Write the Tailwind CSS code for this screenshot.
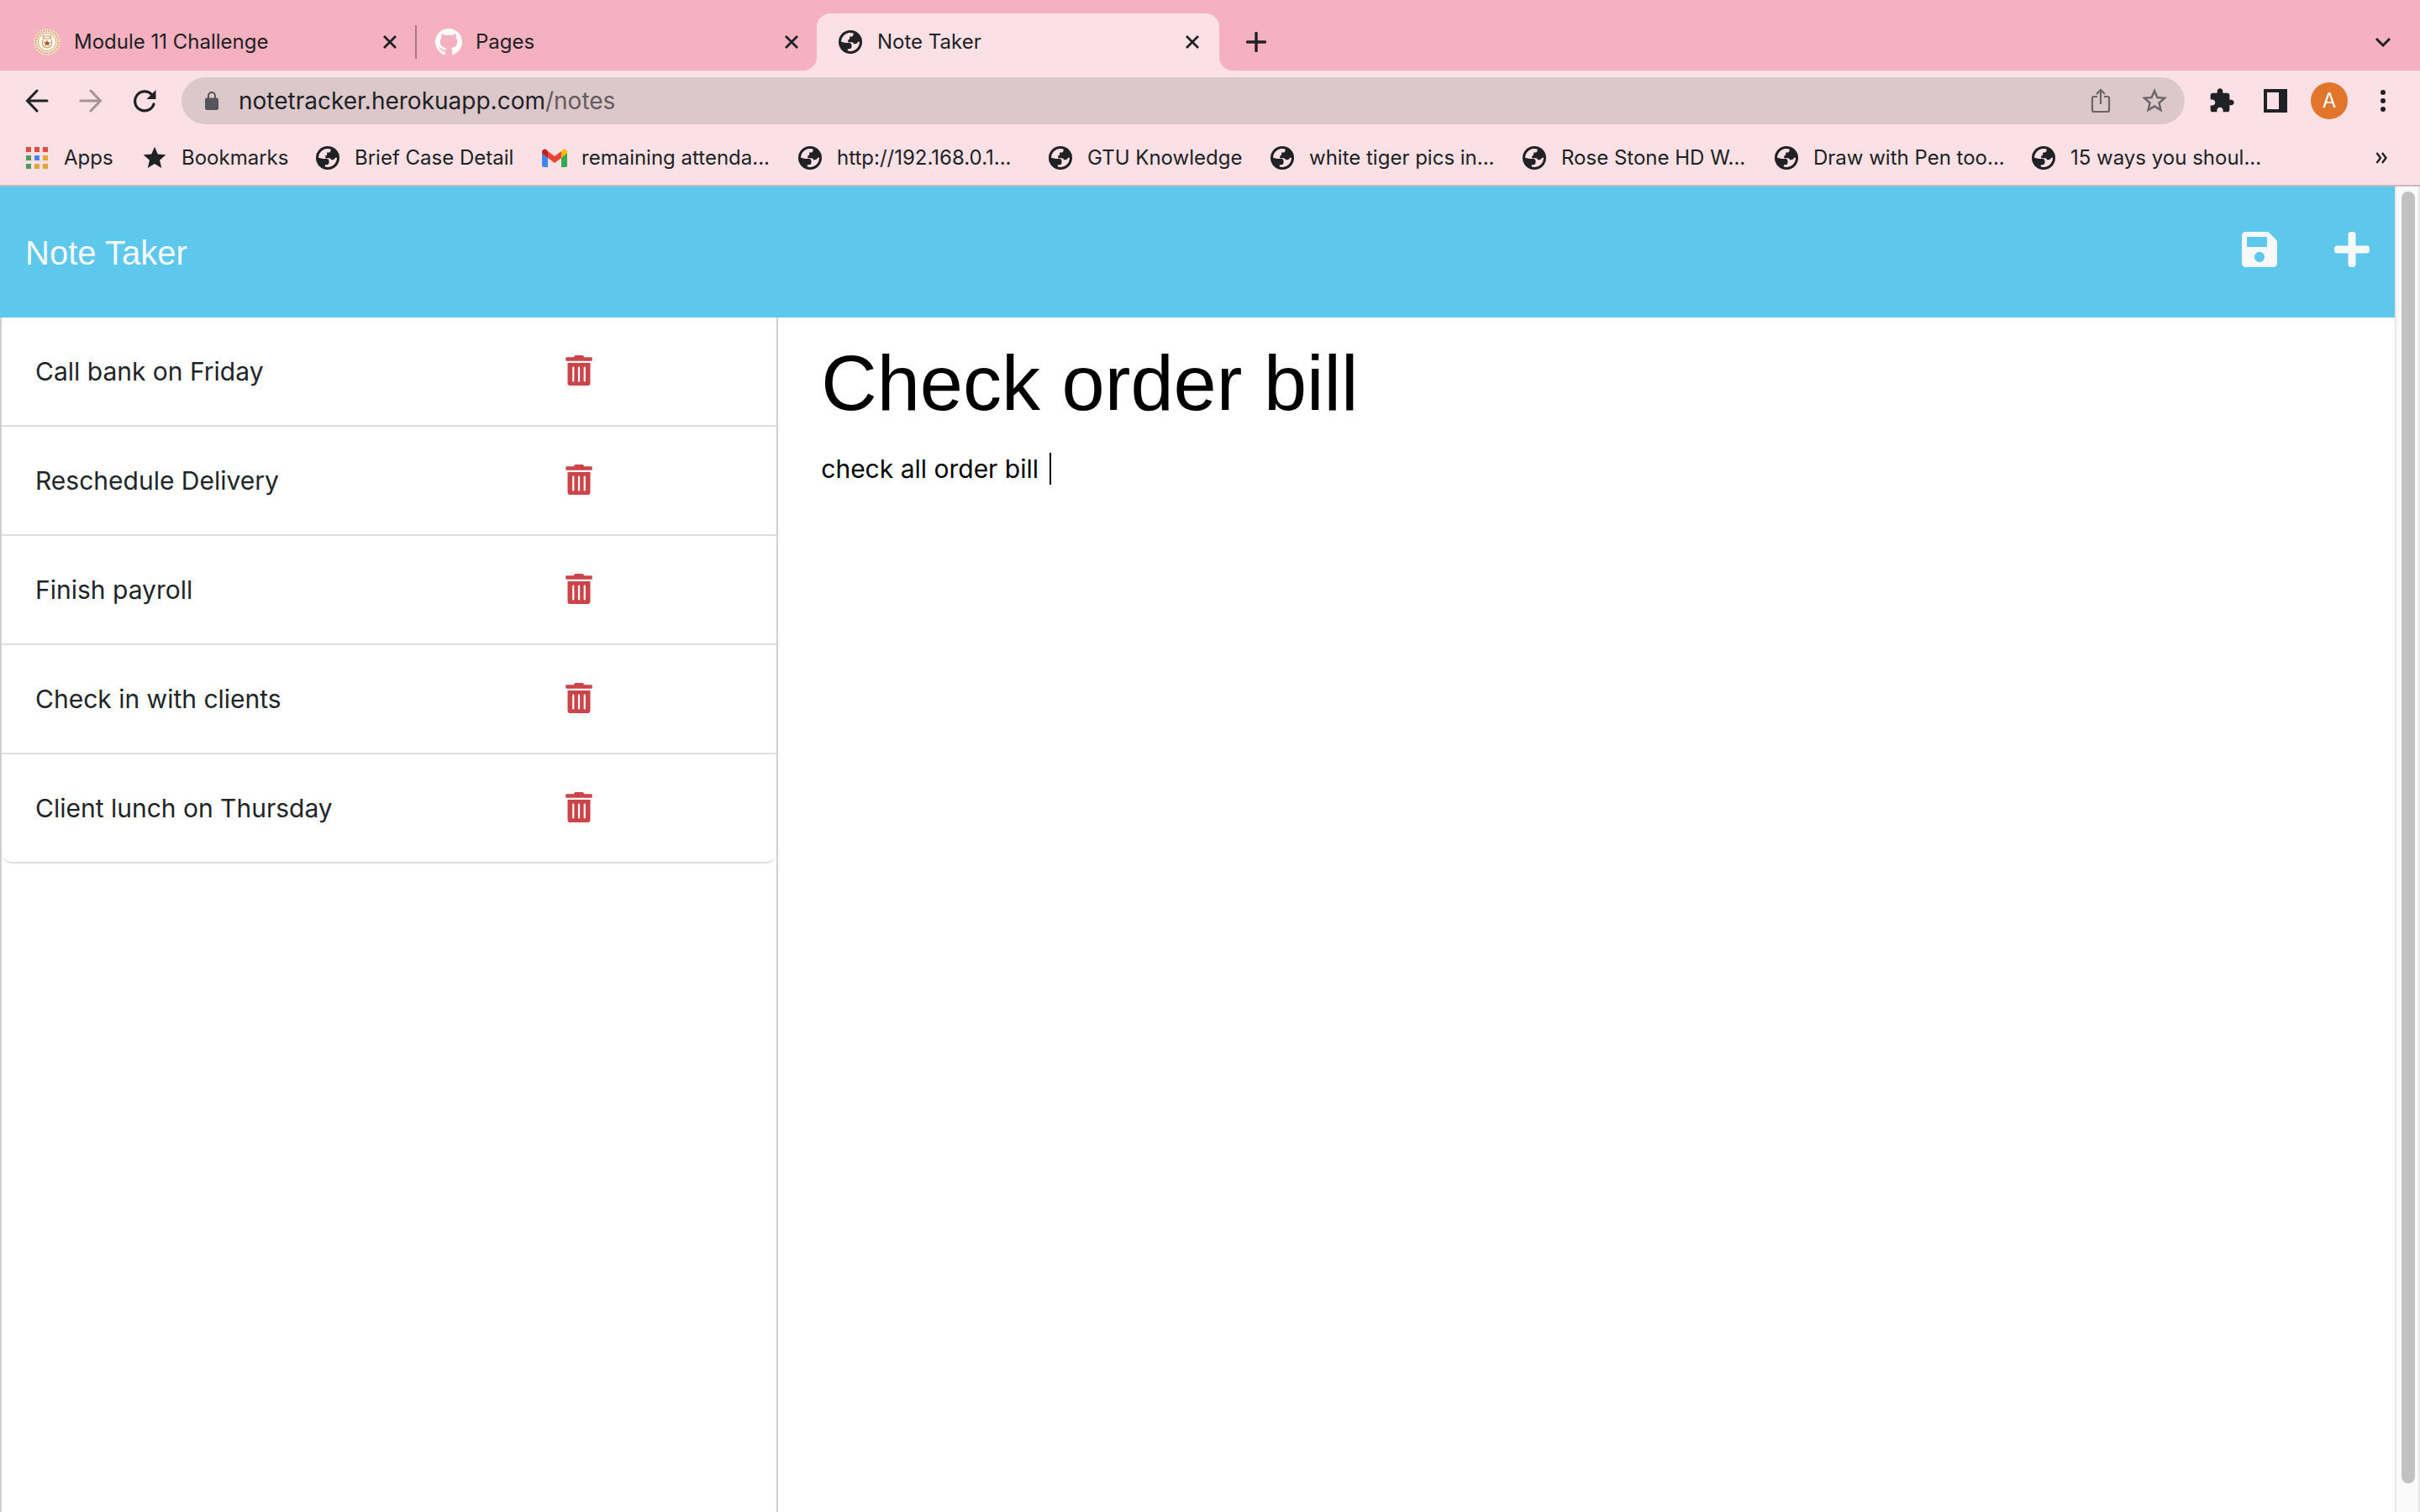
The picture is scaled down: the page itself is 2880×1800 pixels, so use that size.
<!DOCTYPE html>
<html lang="en">
<head>
<meta charset="utf-8">
<meta name="viewport" content="width=device-width, initial-scale=1">
<title>Note Taker</title>
<script src="https://cdn.jsdelivr.net/npm/@tailwindcss/browser@4"></script>
</head>
<body class="flex min-h-screen flex-col bg-white font-['Inter',sans-serif] text-[#202124]">

<!-- shared symbols -->
<svg class="hidden" aria-hidden="true">
  <symbol id="globe" viewBox="0 0 28 28"><circle cx="14" cy="14" r="14" fill="#202124"/><path fill="#fbe1e5" d="M3 13.800A11 11 0 0 1 17.600 3.600v1.200a2.800 2.800 0 0 1-2.800 2.800h-1.600v2a2 2 0 0 1-2 2v2.600h4.600a2.400 2.400 0 0 1 2.300 2h1.900a3 3 0 0 0 3-2.400h2A11 11 0 0 1 10.800 24.500v-2.300h2.400a2.400 2.400 0 0 0 2.300-2.400v-2a2.800 2.800 0 0 0-2.800-2.800H8.400Z"/></symbol>
  <symbol id="close" viewBox="0 0 16 16"><path d="M1 1l14 14M15 1L1 15" stroke="#202124" stroke-width="2.800" fill="none"/></symbol>
  <symbol id="trash" viewBox="0 0 448 512"><path fill="currentColor" d="M32 464a48 48 0 0 0 48 48h288a48 48 0 0 0 48-48V128H32zm272-256a16 16 0 0 1 32 0v224a16 16 0 0 1-32 0zm-96 0a16 16 0 0 1 32 0v224a16 16 0 0 1-32 0zm-96 0a16 16 0 0 1 32 0v224a16 16 0 0 1-32 0zM432 32H312l-9.400-18.700A24 24 0 0 0 281.100 0H166.800a23.720 23.720 0 0 0-21.400 13.300L136 32H16A16 16 0 0 0 0 48v32a16 16 0 0 0 16 16h416a16 16 0 0 0 16-16V48a16 16 0 0 0-16-16z"/></symbol>
</svg>

<!-- tab strip -->
<div class="flex h-[84px] items-end bg-[#f5b1bf] pl-4 text-2xl">
  <div class="flex h-[68px] w-[480px] items-center pl-6">
    <svg class="size-8 shrink-0" viewBox="0 0 32 32" fill="none"><circle cx="16" cy="16" r="15.500" fill="#f8e6d4"/><circle cx="16" cy="16" r="13.500" stroke="#d59a66" stroke-width="2.400" stroke-dasharray="1.400 1.400"/><circle cx="16" cy="16" r="10.500" fill="#fffaf4" stroke="#dba878" stroke-width="1"/><path d="M11.500 9h9v3h-9zM10.500 13.500v4a5.500 5.500 0 0 0 11 0v-4" stroke="#d0925e" stroke-width="1.200"/><path fill="#b8602a" d="M16 13.500l1.200 2.500 2.800.3-2 1.900.5 2.800-2.500-1.400-2.500 1.400.5-2.800-2-1.900 2.800-.3z"/></svg>
    <span class="ml-4 flex-1 truncate">Module 11 Challenge</span>
    <button class="mr-3.5 flex size-8 items-center justify-center" aria-label="Close tab"><svg class="size-4"><use href="#close"/></svg></button>
    <span class="h-10 w-0.5 bg-[#a67a83]"></span>
  </div>
  <div class="flex h-[68px] w-[476px] items-center pl-[22px] pr-3.5">
    <svg class="size-8 shrink-0" viewBox="0 0 16 16" fill="#fff"><path d="M8 0C3.580 0 0 3.580 0 8c0 3.540 2.290 6.530 5.470 7.590.4.070.55-.17.55-.38 0-.19-.01-.82-.01-1.490-2.010.37-2.530-.49-2.690-.94-.09-.23-.48-.94-.82-1.130-.28-.15-.68-.52-.01-.53.63-.01 1.080.58 1.230.82.72 1.210 1.870.87 2.330.66.07-.52.28-.87.51-1.070-1.780-.2-3.640-.89-3.640-3.950 0-.87.31-1.590.82-2.150-.08-.2-.36-1.020.08-2.120 0 0 .67-.21 2.200.82.64-.18 1.320-.27 2-.27s1.360.09 2 .27c1.530-1.040 2.200-.82 2.200-.82.44 1.100.16 1.920.08 2.120.51.56.82 1.270.82 2.150 0 3.070-1.870 3.750-3.650 3.950.29.25.54.73.54 1.480 0 1.070-.01 1.930-.01 2.200 0 .21.15.46.55.38A8.010 8.010 0 0 0 16 8c0-4.420-3.580-8-8-8z"/></svg>
    <span class="ml-4 flex-1 truncate">Pages</span>
    <button class="flex size-8 items-center justify-center" aria-label="Close tab"><svg class="size-4"><use href="#close"/></svg></button>
  </div>
  <div class="relative flex h-[68px] w-[479px] items-center rounded-t-2xl bg-[#fbe1e5] pl-6 pr-4">
    <svg class="absolute -left-4 bottom-0 size-4" viewBox="0 0 16 16"><path d="M16 0v16H0A16 16 0 0 0 16 0z" fill="#fbe1e5"/></svg>
    <svg class="absolute -right-4 bottom-0 size-4" viewBox="0 0 16 16"><path d="M0 0v16h16A16 16 0 0 1 0 0z" fill="#fbe1e5"/></svg>
    <span class="flex size-8 items-center justify-center"><svg class="size-7"><use href="#globe"/></svg></span>
    <span class="ml-4 flex-1 truncate">Note Taker</span>
    <button class="flex size-8 items-center justify-center" aria-label="Close tab"><svg class="size-4"><use href="#close"/></svg></button>
  </div>
  <button class="ml-3 flex h-[68px] w-16 items-center justify-center" aria-label="New tab"><svg class="size-6" viewBox="0 0 24 24"><path d="M12 1.500v21M1.500 12h21" stroke="#202124" stroke-width="3.400" stroke-linecap="round"/></svg></button>
  <button class="ml-auto mr-3 flex h-[68px] w-16 items-center justify-center" aria-label="Search tabs"><svg class="h-3 w-5" viewBox="0 0 20 12"><path d="M2 2l8 8 8-8" fill="none" stroke="#202124" stroke-width="3"/></svg></button>
</div>

<!-- toolbar -->
<div class="flex h-[72px] items-center bg-[#fbe1e5] px-3">
  <button class="flex w-16 justify-center" aria-label="Back"><svg class="size-7" viewBox="0 0 28 28" fill="none" stroke="#202124" stroke-width="3" stroke-linecap="round"><path d="M26 14H3M14 2L2.500 14 14 26"/></svg></button>
  <button class="flex w-16 justify-center" aria-label="Forward"><svg class="size-7" viewBox="0 0 28 28" fill="none" stroke="#a39297" stroke-width="3" stroke-linecap="round"><path d="M2 14h23M14 2l11.500 12L14 26"/></svg></button>
  <button class="flex w-16 justify-center" aria-label="Reload"><svg class="size-7" viewBox="0 0 28 28"><path d="M25 18A11.500 11.500 0 1 1 22.500 6.500" fill="none" stroke="#202124" stroke-width="3.200" stroke-linecap="round"/><path d="M27.500 1v11h-11z" fill="#202124"/></svg></button>
  <div class="ml-3 flex h-14 flex-1 items-center rounded-full bg-[#dcc8cb] pl-7 pr-1">
    <svg class="h-[22px] w-4" viewBox="0 0 16 22"><path d="M4 9V5a4 4 0 0 1 8 0v4" fill="none" stroke="#54565a" stroke-width="2"/><rect y="7.500" width="16" height="14.500" rx="2" fill="#54565a"/></svg>
    <div class="ml-6 flex-1 text-[28px] leading-9" role="textbox" aria-label="Address" contenteditable="true" spellcheck="false">notetracker.herokuapp.com<span class="text-[#65595c]">/notes</span></div>
    <button class="flex w-16 justify-center" aria-label="Share"><svg class="h-[30px] w-6" viewBox="0 0 24 30" fill="none" stroke="#696568" stroke-width="2.200"><path d="M8 10H4a2 2 0 0 0-2 2v14a2 2 0 0 0 2 2h16a2 2 0 0 0 2-2V12a2 2 0 0 0-2-2h-4M12 19V2.500M7 7l5-5 5 5"/></svg></button>
    <button class="flex w-16 justify-center" aria-label="Bookmark this page"><svg class="size-9" viewBox="0 0 24 24" fill="#696568"><path d="M22 9.240l-7.190-.62L12 2 9.190 8.630 2 9.240l5.460 4.730L5.820 21 12 17.270 18.180 21l-1.630-7.030L22 9.240zM12 15.400l-3.760 2.270 1-4.280-3.320-2.880 4.380-.38L12 6.100l1.710 4.040 4.380.38-3.320 2.880 1 4.280L12 15.400z"/></svg></button>
  </div>
  <button class="ml-3 flex w-16 justify-center" aria-label="Extensions"><svg class="size-8" viewBox="0 0 24 24" fill="#202124"><path d="M20.500 11H19V7c0-1.100-.9-2-2-2h-4V3.500C13 2.120 11.880 1 10.500 1S8 2.120 8 3.500V5H4c-1.100 0-1.990.9-1.990 2v3.800H3.500c1.490 0 2.700 1.210 2.700 2.700s-1.210 2.700-2.700 2.700H2V20c0 1.100.9 2 2 2h3.800v-1.500c0-1.490 1.210-2.700 2.700-2.700s2.700 1.210 2.700 2.700V22H17c1.100 0 2-.9 2-2v-4h1.500c1.380 0 2.500-1.120 2.500-2.500S21.880 11 20.500 11z"/></svg></button>
  <button class="flex w-16 justify-center" aria-label="Side panel"><svg class="size-7" viewBox="0 0 28 28"><path fill="#202124" fill-rule="evenodd" d="M0 0h28v28H0zM4 4v20h14V4z"/></svg></button>
  <button class="flex w-16 justify-center" aria-label="Profile"><span class="flex size-11 items-center justify-center rounded-full bg-[#e0752b] text-2xl text-white">A</span></button>
  <button class="flex w-16 justify-center" aria-label="Menu"><svg class="h-[26px] w-1.5" viewBox="0 0 6 26" fill="#202124"><circle cx="3" cy="3" r="3"/><circle cx="3" cy="13" r="3"/><circle cx="3" cy="23" r="3"/></svg></button>
</div>

<!-- bookmarks bar -->
<nav class="flex h-[66px] items-center border-b-2 border-[#cdb7bb] bg-[#fbe1e5] pl-7 pr-2.5 text-2xl whitespace-nowrap" aria-label="Bookmarks">
  <a href="#" class="flex w-[140px] items-center gap-4"><svg class="size-8" viewBox="0 0 32 32"><path fill="#e34b3f" d="M3 3h6v6H3zM13 3h6v6h-6zM23 3h6v6h-6z"/><path fill="#519a5b" d="M3 13h6v6H3zM3 23h6v6H3z"/><path fill="#4285f4" d="M13 13h6v6h-6z"/><path fill="#e6a435" d="M23 13h6v6h-6zM13 23h6v6h-6zM23 23h6v6h-6z"/></svg>Apps</a>
  <a href="#" class="flex w-[206px] items-center gap-4"><svg class="size-8" viewBox="0 0 24 24" fill="#202124"><path d="M12 17.270L18.180 21l-1.640-7.030L22 9.240l-7.190-.61L12 2 9.190 8.630 2 9.240l5.460 4.730L5.820 21z"/></svg>Bookmarks</a>
  <a href="#" class="flex w-[270px] items-center gap-4"><svg class="size-8 p-0.5"><use href="#globe"/></svg>Brief Case Detail</a>
  <a href="#" class="flex w-[304px] items-center gap-4"><svg class="size-8" viewBox="0 0 32 32"><path fill="#4285f4" d="M1 8l7 5v14H3a2 2 0 0 1-2-2z"/><path fill="#34a853" d="M24 13l7-5v17a2 2 0 0 1-2 2h-5z"/><path fill="#fbbc04" d="M24 8.500l2-2c2-2 5-.5 5 2.500v1.500L24 16z"/><path fill="#ea4335" d="M8 8l8 6 8-6v8l-8 6-8-6z"/><path fill="#c5221f" d="M1 9c0-3 3-4.500 5-3l2 2v8l-7-5.500z"/></svg>remaining attenda...</a>
  <a href="#" class="flex w-[298px] items-center gap-4"><svg class="size-8 p-0.5"><use href="#globe"/></svg>http://192.168.0.1...</a>
  <a href="#" class="flex w-[264px] items-center gap-4"><svg class="size-8 p-0.5"><use href="#globe"/></svg>GTU Knowledge</a>
  <a href="#" class="flex w-[300px] items-center gap-4"><svg class="size-8 p-0.5"><use href="#globe"/></svg>white tiger pics in...</a>
  <a href="#" class="flex w-[300px] items-center gap-4"><svg class="size-8 p-0.5"><use href="#globe"/></svg>Rose Stone HD W...</a>
  <a href="#" class="flex w-[306px] items-center gap-4"><svg class="size-8 p-0.5"><use href="#globe"/></svg>Draw with Pen too...</a>
  <a href="#" class="flex items-center gap-4"><svg class="size-8 p-0.5"><use href="#globe"/></svg>15 ways you shoul...</a>
  <button class="ml-auto flex w-[72px] justify-center" aria-label="More bookmarks"><svg class="h-3.5 w-3.5" viewBox="0 0 14 14" fill="none" stroke="#202124" stroke-width="2.400"><path d="M1.500 1L6 7l-4.500 6M8 1l4.500 6L8 13"/></svg></button>
</nav>

<div class="flex flex-1">
  <div class="flex flex-1 flex-col">
    <header class="flex h-[156px] items-center justify-between bg-[#5dc7ec] pl-[30px] pr-1.5 text-[#f8f9fa]">
      <a href="#" class="pt-0.5 font-['Liberation_Sans',sans-serif] text-[40px] leading-[60px]">Note Taker</a>
      <div class="flex gap-5 pb-1.5">
        <button class="p-6" aria-label="Save note"><svg class="size-[42px]" viewBox="0 32 448 448" fill="currentColor"><path d="M433.941 129.941l-83.882-83.882A48 48 0 0 0 316.118 32H48C21.490 32 0 53.490 0 80v352c0 26.510 21.490 48 48 48h352c26.510 0 48-21.490 48-48V163.882a48 48 0 0 0-14.059-33.941zM224 416c-35.346 0-64-28.654-64-64 0-35.346 28.654-64 64-64s64 28.654 64 64c0 35.346-28.654 64-64 64zm96-304.520V212c0 6.627-5.373 12-12 12H76c-6.627 0-12-5.373-12-12V108c0-6.627 5.373-12 12-12h228.520c3.183 0 6.235 1.264 8.485 3.515l3.480 3.480A11.996 11.996 0 0 1 320 111.480z"/></svg></button>
        <button class="p-6" aria-label="New note"><svg class="size-[42px]" viewBox="0 32 448 448" fill="currentColor"><path d="M416 208H272V64c0-17.670-14.330-32-32-32h-32c-17.670 0-32 14.330-32 32v144H32c-17.670 0-32 14.330-32 32v32c0 17.670 14.330 32 32 32h144v144c0 17.670 14.330 32 32 32h32c17.670 0 32-14.330 32-32V304h144c17.670 0 32-14.330 32-32v-32c0-17.670-14.330-32-32-32z"/></svg></button>
      </div>
    </header>

    <div class="flex flex-1">
      <aside class="w-[32.5%] border-x-2 border-[#d0d0d0]">
        <ul class="overflow-hidden rounded-b-xl text-[30px] text-[#212529]">
          <li class="flex h-[130px] items-center justify-between border-b-2 border-[#dfdfdf] pl-10 pr-[219px]"><span>Call bank on Friday</span><button class="pb-0.5 text-[#cb444a]" aria-label="Delete note"><svg class="h-9 w-8"><use href="#trash"/></svg></button></li>
          <li class="flex h-[130px] items-center justify-between border-b-2 border-[#dfdfdf] pl-10 pr-[219px]"><span>Reschedule Delivery</span><button class="pb-0.5 text-[#cb444a]" aria-label="Delete note"><svg class="h-9 w-8"><use href="#trash"/></svg></button></li>
          <li class="flex h-[130px] items-center justify-between border-b-2 border-[#dfdfdf] pl-10 pr-[219px]"><span>Finish payroll</span><button class="pb-0.5 text-[#cb444a]" aria-label="Delete note"><svg class="h-9 w-8"><use href="#trash"/></svg></button></li>
          <li class="flex h-[130px] items-center justify-between border-b-2 border-[#dfdfdf] pl-10 pr-[219px]"><span>Check in with clients</span><button class="pb-0.5 text-[#cb444a]" aria-label="Delete note"><svg class="h-9 w-8"><use href="#trash"/></svg></button></li>
          <li class="flex h-[130px] items-center justify-between rounded-b-xl border-b-2 border-[#dfdfdf] pl-10 pr-[219px]"><span>Client lunch on Thursday</span><button class="pb-0.5 text-[#cb444a]" aria-label="Delete note"><svg class="h-9 w-8"><use href="#trash"/></svg></button></li>
        </ul>
      </aside>

      <main class="flex flex-1 flex-col px-[51px] pt-[18px] text-black">
        <input type="text" aria-label="Note title" value="Check order bill" class="h-[120px] w-full font-['Liberation_Sans',sans-serif] text-[92px] outline-none">
        <div class="relative mt-[18px] flex flex-1">
          <textarea aria-label="Note text" class="w-full resize-none text-[30px] leading-[48px] outline-none" spellcheck="false">check all order bill </textarea>
          <span class="absolute left-[272px] top-[5px] h-[38px] w-0.5 bg-black"></span>
        </div>
      </main>
    </div>
  </div>

  <!-- scrollbar -->
  <div class="flex w-[30px] border-l-2 border-r-2 border-[#e8e8e8] bg-[#fafafa] pb-[34px] pl-1.5 pt-1.5" aria-hidden="true">
    <div class="w-4 rounded-full bg-[#c1c1c1]"></div>
  </div>
</div>
</body>
</html>
